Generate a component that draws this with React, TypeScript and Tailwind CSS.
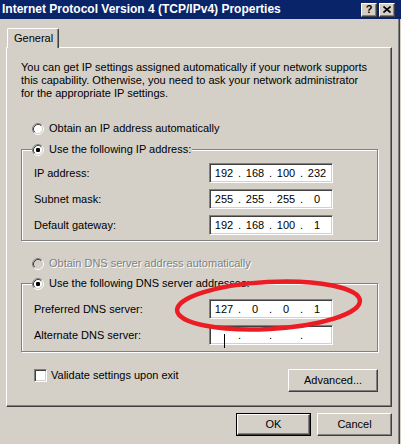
import type { ReactNode } from "react";

type Octets = [string, string, string, string];

function Radio({ checked = false, disabled = false }: { checked?: boolean; disabled?: boolean }) {
  return (
    <svg width="12" height="12" viewBox="0 0 12 12" className="shrink-0">
      <circle cx="6" cy="6" r="4.5" fill={disabled ? "#d4d0c8" : "#ffffff"} />
      <path d="M2.11 9.89 A5.5 5.5 0 0 1 9.89 2.11" fill="none" stroke="#808080" />
      <path d="M9.89 2.11 A5.5 5.5 0 0 1 2.11 9.89" fill="none" stroke="#ffffff" />
      <path d="M2.82 9.18 A4.5 4.5 0 0 1 9.18 2.82" fill="none" stroke="#404040" />
      <path d="M9.18 2.82 A4.5 4.5 0 0 1 2.82 9.18" fill="none" stroke="#d4d0c8" />
      {checked && <rect x="4" y="4" width="4" height="4" rx="1.2" fill="#000000" />}
    </svg>
  );
}

function RadioRow({
  label,
  checked,
  disabled,
}: {
  label: string;
  checked?: boolean;
  disabled?: boolean;
}) {
  return (
    <div className="flex h-[13px] items-center gap-[5px]">
      <Radio checked={checked} disabled={disabled} />
      <span
        className={
          disabled
            ? "text-[#808080] [text-shadow:1px_1px_0_#ffffff]"
            : "text-black"
        }
      >
        {label}
      </span>
    </div>
  );
}

function IpField({ octets, caret = false }: { octets?: Octets; caret?: boolean }) {
  const parts = octets ?? ["", "", "", ""];
  return (
    <div className="flex h-[20px] w-[124px] items-center border border-t-[#808080] border-l-[#808080] border-r-white border-b-white bg-white pl-[2px] shadow-[inset_1px_1px_0_#404040,inset_-1px_-1px_0_#d4d0c8]">
      {parts.map((p, i) => (
        <div key={i} className="flex items-center">
          <span className="relative flex w-[24px] justify-center">
            {p}
            {caret && i === 0 && (
              <span className="absolute left-[12px] top-[-1px] h-[14px] w-px bg-black" />
            )}
          </span>
          {i < 3 && <span className="w-[7px] text-center">.</span>}
        </div>
      ))}
    </div>
  );
}

function FieldRow({ label, children }: { label: string; children: ReactNode }) {
  return (
    <div className="flex h-[20px] items-center">
      <span className="ml-[12px] w-[175px]">{label}</span>
      {children}
    </div>
  );
}

function GroupBox({
  legend,
  height,
  top,
  children,
}: {
  legend: ReactNode;
  height: string;
  top: string;
  children: ReactNode;
}) {
  return (
    <div
      className={`relative w-[357px] border border-[#808080] shadow-[inset_1px_1px_0_#ffffff,1px_1px_0_#ffffff] ${height} ${top}`}
    >
      <div className="absolute -top-[7px] left-[10px] bg-[#d4d0c8] pr-[1px]">{legend}</div>
      {children}
    </div>
  );
}

function Button({
  label,
  width,
  isDefault = false,
}: {
  label: string;
  width: string;
  isDefault?: boolean;
}) {
  return (
    <div className={`h-[23px] ${width} ${isDefault ? "border border-black" : ""}`}>
      <div className="flex h-full w-full items-center justify-center border border-t-white border-l-white border-r-[#404040] border-b-[#404040] shadow-[inset_-1px_-1px_0_#808080]">
        {label}
      </div>
    </div>
  );
}

function CaptionButton({ children }: { children: ReactNode }) {
  return (
    <div className="flex h-[14px] w-[16px] items-center justify-center border border-t-white border-l-white border-r-[#404040] border-b-[#404040] bg-[#d4d0c8] shadow-[inset_-1px_-1px_0_#808080]">
      {children}
    </div>
  );
}

export default function App() {
  return (
    <div className="relative h-[444px] w-[401px] overflow-hidden bg-[#d4d0c8] font-['Liberation_Sans',Arial,sans-serif] text-[11px] leading-[13px] text-black">
      {/* caption */}
      <div className="flex h-[19px] items-center justify-between bg-[#0a246a] pl-[2px] pr-[6px]">
        <span className="text-[12px] font-bold text-white">
          Internet Protocol Version 4 (TCP/IPv4) Properties
        </span>
        <div className="flex gap-[2px]">
          <CaptionButton>
            <span className="text-[11px] font-bold leading-none">?</span>
          </CaptionButton>
          <CaptionButton>
            <svg width="8" height="7" viewBox="0 0 8 7">
              <path d="M0.5 0.5 L7.5 6.5 M7.5 0.5 L0.5 6.5" stroke="#000" strokeWidth="1.6" />
            </svg>
          </CaptionButton>
        </div>
      </div>

      <div className="h-[425px] w-[400px] border-r border-r-[#404040] pt-[9px] shadow-[inset_-1px_0_0_#808080]">
        {/* tab */}
        <div className="relative z-10 -mb-px ml-[7px] flex h-[20px] w-[52px] items-center rounded-tl-[2px] rounded-tr-[2px] border-t border-l border-r border-t-white border-l-white border-r-[#404040] bg-[#d4d0c8] pl-[6px] shadow-[inset_-1px_0_0_#808080]">
          General
        </div>

        {/* tab page */}
        <div className="ml-[6px] h-[360px] w-[386px] border border-t-white border-l-white border-r-[#404040] border-b-[#404040] pl-[14px] pt-[13px] shadow-[inset_-1px_-1px_0_#808080]">
          <p>
            You can get IP settings assigned automatically if your network supports
            <br />
            this capability. Otherwise, you need to ask your network administrator
            <br />
            for the appropriate IP settings.
          </p>

          <div className="ml-[11px] mt-[22px]">
            <RadioRow label="Obtain an IP address automatically" />
          </div>

          <GroupBox
            top="mt-[14px]"
            height="h-[92px]"
            legend={<RadioRow label="Use the following IP address:" checked />}
          >
            <div className="flex flex-col gap-[6px] pt-[13px]">
              <FieldRow label="IP address:">
                <IpField octets={["192", "168", "100", "232"]} />
              </FieldRow>
              <FieldRow label="Subnet mask:">
                <IpField octets={["255", "255", "255", "0"]} />
              </FieldRow>
              <FieldRow label="Default gateway:">
                <IpField octets={["192", "168", "100", "1"]} />
              </FieldRow>
            </div>
          </GroupBox>

          <div className="ml-[11px] mt-[16px]">
            <RadioRow label="Obtain DNS server address automatically" disabled />
          </div>

          <GroupBox
            top="mt-[13px]"
            height="h-[69px]"
            legend={<RadioRow label="Use the following DNS server addresses:" checked />}
          >
            <div className="flex flex-col gap-[6px] pt-[15px]">
              <FieldRow label="Preferred DNS server:">
                <IpField octets={["127", "0", "0", "1"]} />
              </FieldRow>
              <FieldRow label="Alternate DNS server:">
                <IpField caret />
              </FieldRow>
            </div>
          </GroupBox>

          <div className="mt-[17px] flex w-[357px] items-start justify-between">
            <div className="ml-[13px] flex items-center gap-[4px]">
              <div className="h-[13px] w-[13px] border border-t-[#808080] border-l-[#808080] border-r-white border-b-white bg-white shadow-[inset_1px_1px_0_#404040,inset_-1px_-1px_0_#d4d0c8]" />
              <span>Validate settings upon exit</span>
            </div>
            <Button label="Advanced..." width="w-[90px]" />
          </div>
        </div>

        <div className="ml-[6px] mt-[6px] flex w-[386px] justify-end gap-[6px]">
          <Button label="OK" width="w-[75px]" isDefault />
          <Button label="Cancel" width="w-[75px]" />
        </div>
      </div>

      {/* hand-drawn annotation */}
      <svg
        className="pointer-events-none absolute left-0 top-0"
        width="401"
        height="444"
        viewBox="0 0 401 444"
      >
        <ellipse
          cx="268.5"
          cy="305.5"
          rx="91.5"
          ry="23.5"
          transform="rotate(-3 268.5 305.5)"
          fill="none"
          stroke="#ec1c24"
          strokeWidth="4.5"
        />
      </svg>
    </div>
  );
}
